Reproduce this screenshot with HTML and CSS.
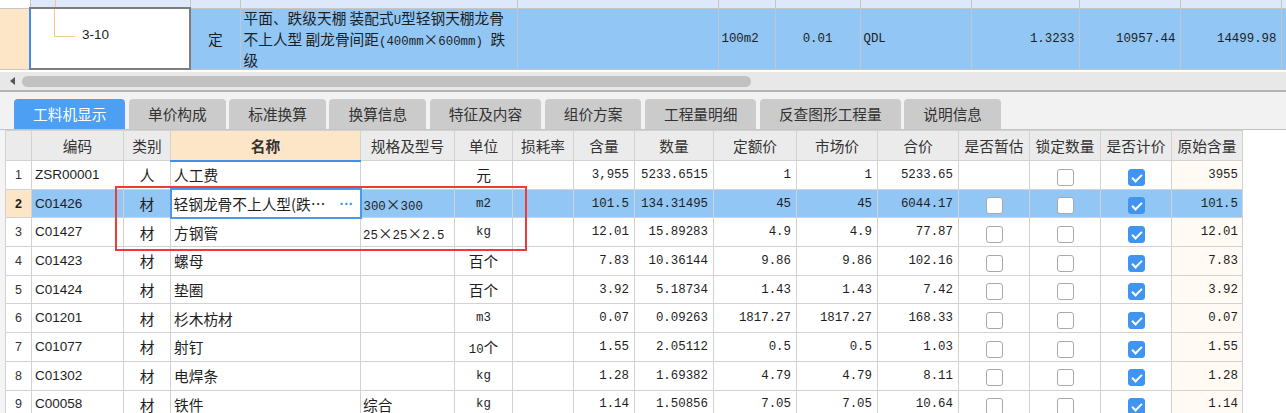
FILE: index.html
```html
<!DOCTYPE html>
<html lang="zh-CN">
<head>
<meta charset="utf-8">
<title>工料机显示</title>
<link rel="stylesheet" href="styles.css">
</head>
<body>
<div class="top">
  <table class="toptbl">
    <colgroup>
      <col class="t0"><col class="t1"><col class="t2"><col class="t3"><col class="t4"><col class="t5"><col class="t6"><col class="t7"><col class="t8"><col class="t9"><col class="t10"><col class="t11">
    </colgroup>
    <tr class="strip">
      <td class="s0"></td><td class="s1"></td><td></td><td></td><td></td><td></td><td></td><td></td><td></td><td></td><td></td><td></td>
    </tr>
    <tr class="main">
      <td class="peach"></td>
      <td class="sel">
        <div class="tree"><span class="elbow"></span><span class="code">3-10</span></div>
      </td>
      <td class="c">定</td>
      <td class="desc">平面、跌级天棚 装配式<span class="n">U</span>型轻钢天棚龙骨<br>不上人型 副龙骨间距<span class="n">(400mm</span>×<span class="n">600mm) </span>跌<br>级</td>
      <td></td>
      <td class="n l">100m2</td>
      <td class="n c">0.01</td>
      <td class="n l">QDL</td>
      <td class="n r">1.3233</td>
      <td class="n r">10957.44</td>
      <td class="n r">14499.98</td>
      <td></td>
    </tr>
  </table>
</div>

<div class="hscroll">
  <span class="arrow"></span>
  <span class="thumb"></span>
</div>

<div class="panel">
  <div class="tabs">
    <span class="tab active">工料机显示</span>
    <span class="tab">单价构成</span>
    <span class="tab">标准换算</span>
    <span class="tab">换算信息</span>
    <span class="tab">特征及内容</span>
    <span class="tab">组价方案</span>
    <span class="tab">工程量明细</span>
    <span class="tab">反查图形工程量</span>
    <span class="tab">说明信息</span>
  </div>

  <div class="gridwrap">
    <table class="grid">
      <colgroup>
        <col class="g-num"><col class="g-code"><col class="g-cat"><col class="g-name"><col class="g-spec"><col class="g-unit"><col class="g-loss"><col class="g-qty"><col class="g-amt"><col class="g-quota"><col class="g-mkt"><col class="g-sum"><col class="g-est"><col class="g-lock"><col class="g-calc"><col class="g-orig">
      </colgroup>
      <tr class="head">
        <th></th><th>编码</th><th>类别</th><th class="hsel">名称</th><th>规格及型号</th><th>单位</th><th>损耗率</th><th>含量</th><th>数量</th><th>定额价</th><th>市场价</th><th>合价</th><th>是否暂估</th><th>锁定数量</th><th>是否计价</th><th>原始含量</th>
      </tr>
      <tr>
        <td class="rn">1</td><td class="n code">ZSR00001</td><td class="c">人</td><td class="name">人工费</td><td></td><td class="c">元</td><td></td>
        <td class="n r">3,955</td><td class="n r">5233.6515</td><td class="n r">1</td><td class="n r">1</td><td class="n r">5233.65</td>
        <td></td><td class="c"><span class="cb"></span></td><td class="c"><span class="cb on"></span></td><td class="n r orig">3955</td>
      </tr>
      <tr class="cur">
        <td class="rn">2</td><td class="n code">C01426</td><td class="c">材</td>
        <td class="edit"><div class="ed"><span class="et">轻钢龙骨不上人型(跌…</span><span class="dots">···</span></div></td>
        <td class="spec"><span class="n">300</span>×<span class="n">300</span></td><td class="n c">m2</td><td></td>
        <td class="n r">101.5</td><td class="n r">134.31495</td><td class="n r">45</td><td class="n r">45</td><td class="n r">6044.17</td>
        <td class="c"><span class="cb"></span></td><td class="c"><span class="cb"></span></td><td class="c"><span class="cb on"></span></td><td class="n r orig">101.5</td>
      </tr>
      <tr>
        <td class="rn">3</td><td class="n code">C01427</td><td class="c">材</td><td class="name">方钢管</td>
        <td class="spec"><span class="n">25</span>×<span class="n">25</span>×<span class="n">2.5</span></td><td class="n c">kg</td><td></td>
        <td class="n r">12.01</td><td class="n r">15.89283</td><td class="n r">4.9</td><td class="n r">4.9</td><td class="n r">77.87</td>
        <td class="c"><span class="cb"></span></td><td class="c"><span class="cb"></span></td><td class="c"><span class="cb on"></span></td><td class="n r orig">12.01</td>
      </tr>
      <tr>
        <td class="rn">4</td><td class="n code">C01423</td><td class="c">材</td><td class="name">螺母</td>
        <td></td><td class="c">百个</td><td></td>
        <td class="n r">7.83</td><td class="n r">10.36144</td><td class="n r">9.86</td><td class="n r">9.86</td><td class="n r">102.16</td>
        <td class="c"><span class="cb"></span></td><td class="c"><span class="cb"></span></td><td class="c"><span class="cb on"></span></td><td class="n r orig">7.83</td>
      </tr>
      <tr>
        <td class="rn">5</td><td class="n code">C01424</td><td class="c">材</td><td class="name">垫圈</td>
        <td></td><td class="c">百个</td><td></td>
        <td class="n r">3.92</td><td class="n r">5.18734</td><td class="n r">1.43</td><td class="n r">1.43</td><td class="n r">7.42</td>
        <td class="c"><span class="cb"></span></td><td class="c"><span class="cb"></span></td><td class="c"><span class="cb on"></span></td><td class="n r orig">3.92</td>
      </tr>
      <tr>
        <td class="rn">6</td><td class="n code">C01201</td><td class="c">材</td><td class="name">杉木枋材</td>
        <td></td><td class="n c">m3</td><td></td>
        <td class="n r">0.07</td><td class="n r">0.09263</td><td class="n r">1817.27</td><td class="n r">1817.27</td><td class="n r">168.33</td>
        <td class="c"><span class="cb"></span></td><td class="c"><span class="cb"></span></td><td class="c"><span class="cb on"></span></td><td class="n r orig">0.07</td>
      </tr>
      <tr>
        <td class="rn">7</td><td class="n code">C01077</td><td class="c">材</td><td class="name">射钉</td>
        <td></td><td class="c"><span class="n">10</span>个</td><td></td>
        <td class="n r">1.55</td><td class="n r">2.05112</td><td class="n r">0.5</td><td class="n r">0.5</td><td class="n r">1.03</td>
        <td class="c"><span class="cb"></span></td><td class="c"><span class="cb"></span></td><td class="c"><span class="cb on"></span></td><td class="n r orig">1.55</td>
      </tr>
      <tr>
        <td class="rn">8</td><td class="n code">C01302</td><td class="c">材</td><td class="name">电焊条</td>
        <td></td><td class="n c">kg</td><td></td>
        <td class="n r">1.28</td><td class="n r">1.69382</td><td class="n r">4.79</td><td class="n r">4.79</td><td class="n r">8.11</td>
        <td class="c"><span class="cb"></span></td><td class="c"><span class="cb"></span></td><td class="c"><span class="cb on"></span></td><td class="n r orig">1.28</td>
      </tr>
      <tr>
        <td class="rn">9</td><td class="n code">C00058</td><td class="c">材</td><td class="name">铁件</td>
        <td class="spec">综合</td><td class="n c">kg</td><td></td>
        <td class="n r">1.14</td><td class="n r">1.50856</td><td class="n r">7.05</td><td class="n r">7.05</td><td class="n r">10.64</td>
        <td class="c"><span class="cb"></span></td><td class="c"><span class="cb"></span></td><td class="c"><span class="cb on"></span></td><td class="n r orig">1.14</td>
      </tr>
    </table>
    <div class="mark"></div>
  </div>
</div>
</body>
</html>
```

FILE: styles.css
```css
html, body {
  margin: 0;
  padding: 0;
  width: 1286px;
  height: 413px;
  overflow: hidden;
  background: #ffffff;
  font-family: "Noto Sans CJK SC", "Noto Sans", sans-serif;
  color: #1e1e1e;
}

.n {
  font-family: "Liberation Mono", "Noto Sans CJK SC", monospace;
  font-size: 12.4px;
}

/* ---------- top table ---------- */
.top {
  height: 72px;
  overflow: hidden;
}
.toptbl {
  border-collapse: collapse;
  table-layout: fixed;
  width: 1291px;
  font-size: 14.7px;
}
.t0 { width: 30px; }
.t1 { width: 160px; }
.t2 { width: 50px; }
.t3 { width: 277px; }
.t4 { width: 201px; }
.t5 { width: 57px; }
.t6 { width: 85px; }
.t7 { width: 111px; }
.t8 { width: 108px; }
.t9 { width: 101px; }
.t10 { width: 101px; }
.t11 { width: 10px; }

.toptbl td {
  border: 1px solid #c6c6c6;
  padding: 0;
  white-space: nowrap;
  overflow: hidden;
}
.toptbl tr:first-child td { border-top: 0; }
.toptbl td:first-child { border-left: 0; }

.strip td {
  height: 7px;
  background: #dde9fb;
}
.strip .s0 { background: #ffffff; }
.strip .s1 {
  background: linear-gradient(#f7c68c, #f7c68c) no-repeat 24px 0 / 1px 100%, #dde9fb;
}

.main td {
  height: 58px;
  background: #91c6f5;
  vertical-align: middle;
}
.main td.peach { background: #fde5c8; }
.main td.sel {
  background: #ffffff;
  border: 2px solid #7d7d7d;
  border-left: 2px solid #3d8de9;
  vertical-align: top;
}
.tree {
  display: flex;
  align-items: flex-start;
  height: 56px;
}
.elbow {
  width: 20px;
  height: 27px;
  margin-left: 23px;
  border-left: 1px solid #f7c68c;
  border-bottom: 1px solid #f7c68c;
}
.code {
  margin-top: 18px;
  margin-left: 7px;
  font-family: "Liberation Sans", sans-serif;
  font-size: 13.5px;
  line-height: 16px;
}
.toptbl .desc {
  padding-left: 3px;
  line-height: 18px;
  font-size: 14.7px;
}
.l { text-align: left; }
.c { text-align: center; }
.r { text-align: right; }
.toptbl .l { padding-left: 3px; }
.toptbl .r { padding-right: 4px; }

/* ---------- horizontal scrollbar ---------- */
.hscroll {
  height: 18px;
  background: #e8e8e8;
  border-bottom: 2px solid #b3b3b3;
  display: flex;
  align-items: center;
  padding-left: 10px;
}
.arrow {
  width: 0;
  height: 0;
  border-top: 4px solid transparent;
  border-bottom: 4px solid transparent;
  border-right: 5px solid #555555;
}
.thumb {
  margin-left: 7px;
  width: 729px;
  height: 11px;
  border-radius: 6px;
  background: #c1c1c1;
}

/* ---------- lower panel ---------- */
.panel {
  background: #f2f2f2;
}
.tabs {
  display: flex;
  gap: 3.5px;
  padding: 7px 0 0 14px;
  border-bottom: 1px solid #c4c4c4;
}
.tab {
  padding: 0 19px;
  height: 30px;
  line-height: 30px;
  border-radius: 4px 4px 0 0;
  background: #cbcbcb;
  color: #333333;
  font-size: 14.7px;
  white-space: nowrap;
}
.tab.active {
  background: #4c9ff2;
  color: #ffffff;
}

.gridwrap {
  position: relative;
  padding-left: 5px;
  background: linear-gradient(to right, #f4f4f4 5px, #ffffff 5px);
  height: 300px;
}
.grid {
  border-collapse: collapse;
  table-layout: fixed;
  width: 1237px;
  font-size: 14.7px;
}
.g-num { width: 26px; }
.g-code { width: 92px; }
.g-cat { width: 47px; }
.g-name { width: 190px; }
.g-spec { width: 94px; }
.g-unit { width: 58px; }
.g-loss { width: 61px; }
.g-qty { width: 61px; }
.g-amt { width: 79px; }
.g-quota { width: 83px; }
.g-mkt { width: 81px; }
.g-sum { width: 81px; }
.g-est { width: 71px; }
.g-lock { width: 71px; }
.g-calc { width: 71px; }
.g-orig { width: 71px; }

.grid th,
.grid td {
  border: 1px solid #d2d2d2;
  padding: 0;
  white-space: nowrap;
  overflow: hidden;
  vertical-align: middle;
}
.grid tr { height: 28.7px; }
.grid tr.head { height: 30px; }
.grid th {
  background: #ebebeb;
  font-weight: normal;
  color: #333333;
  text-align: center;
}
.grid th.hsel {
  background: #fde5c8;
  font-weight: bold;
  border-bottom: 2px solid #3f90ea;
}
.grid td { background: #ffffff; }
.grid td.rn {
  text-align: center;
  font-family: "Liberation Sans", sans-serif;
  font-size: 12.5px;
  color: #333333;
}
.grid td.code { padding-left: 3px; }
.grid td.name { padding-left: 3px; }
.grid td.spec { padding-left: 2px; }
.grid td.r { padding-right: 5px; }
.grid td.orig {
  background: #fffaf4;
  padding-right: 4px;
}

.grid tr.cur td { background: #91c6f5; }
.grid tr.cur td.rn {
  background: #fde5c8;
  font-weight: bold;
  color: #222222;
}
.grid tr.cur td.code { border-left: 1px solid #5d9fe6; }
.grid tr.cur td.edit {
  background: #ffffff;
  border: 2px solid #4a98ef;
}
.ed {
  display: flex;
  align-items: center;
  padding-left: 2px;
  padding-right: 6px;
}
.et {
  flex: 1;
  overflow: hidden;
}
.dots {
  color: #3b8fe8;
  font-family: "Liberation Sans", sans-serif;
  font-size: 14px;
  font-weight: bold;
  letter-spacing: 0px;
}

.cb {
  display: inline-block;
  vertical-align: middle;
  position: relative;
  box-sizing: border-box;
  width: 17px;
  height: 17px;
  border: 1px solid #a9a9a9;
  border-radius: 3px;
  background: #ffffff;
}
.cb.on {
  background: #3f95f1;
  border-color: #3f95f1;
}
.cb.on::after {
  content: "";
  position: absolute;
  left: 5px;
  top: 2px;
  width: 4px;
  height: 8px;
  border-right: 2px solid #ffffff;
  border-bottom: 2px solid #ffffff;
  transform: rotate(45deg);
}

.mark {
  position: absolute;
  left: 115px;
  top: 56px;
  width: 408px;
  height: 61px;
  border: 2px solid #ef3a3a;
  pointer-events: none;
}
```
